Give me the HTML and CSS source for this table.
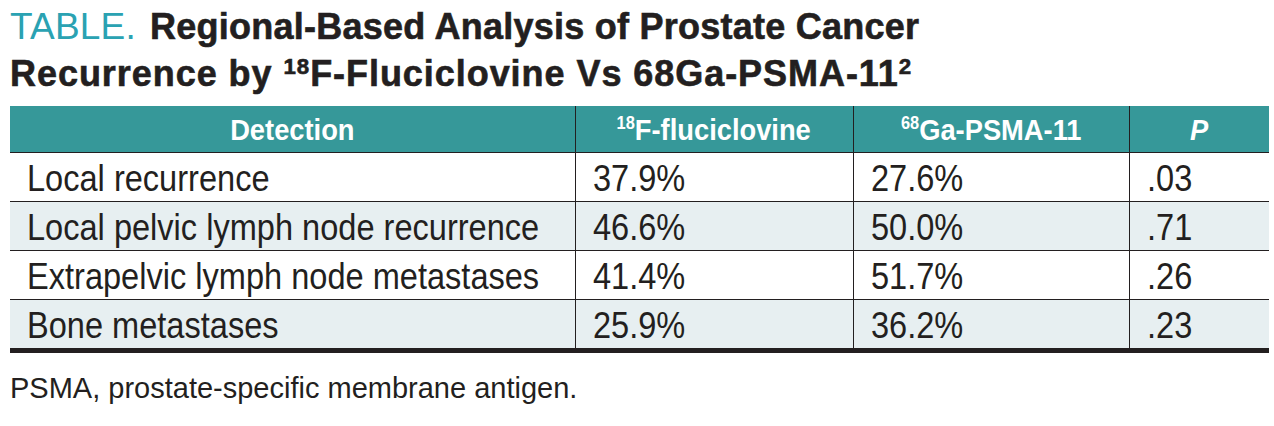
FILE: index.html
```html
<!DOCTYPE html>
<html>
<head>
<meta charset="utf-8">
<link rel="stylesheet" href="styles.css">
</head>
<body>
<div class="page">
  <h1 class="title"><span class="line"><span class="label">TABLE.</span><span class="heading first">Regional-Based Analysis of Prostate Cancer</span></span><span class="line"><span class="heading second">Recurrence by <sup>18</sup>F-Fluciclovine Vs 68Ga-PSMA-11<sup>2</sup></span></span></h1>
  <table class="data">
    <colgroup>
      <col class="c1"><col class="c2"><col class="c3"><col class="c4">
    </colgroup>
    <thead>
      <tr>
        <th><span class="hx">Detection</span></th>
        <th><span class="hx"><sup>18</sup>F-fluciclovine</span></th>
        <th><span class="hx"><sup>68</sup>Ga-PSMA-11</span></th>
        <th><span class="hx"><i>P</i></span></th>
      </tr>
    </thead>
    <tbody>
      <tr>
        <td><span class="tx">Local recurrence</span></td>
        <td><span class="tx">37.9%</span></td>
        <td><span class="tx">27.6%</span></td>
        <td><span class="tx">.03</span></td>
      </tr>
      <tr class="alt">
        <td><span class="tx">Local pelvic lymph node recurrence</span></td>
        <td><span class="tx">46.6%</span></td>
        <td><span class="tx">50.0%</span></td>
        <td><span class="tx">.71</span></td>
      </tr>
      <tr>
        <td><span class="tx">Extrapelvic lymph node metastases</span></td>
        <td><span class="tx">41.4%</span></td>
        <td><span class="tx">51.7%</span></td>
        <td><span class="tx">.26</span></td>
      </tr>
      <tr class="alt">
        <td><span class="tx">Bone metastases</span></td>
        <td><span class="tx">25.9%</span></td>
        <td><span class="tx">36.2%</span></td>
        <td><span class="tx">.23</span></td>
      </tr>
    </tbody>
  </table>
  <p class="note">PSMA, prostate-specific membrane antigen.</p>
</div>
</body>
</html>
```
FILE: styles.css
```css
html, body {
  margin: 0;
  padding: 0;
  background: #ffffff;
}
.page {
  padding: 3px 5px 0 10px;
  font-family: "Liberation Sans", Arial, sans-serif;
  color: #231f20;
}
.title {
  margin: 0;
  font-size: 36px;
  line-height: 47px;
  font-weight: normal;
}
.line {
  display: block;
  white-space: nowrap;
}
.label {
  color: #2aa2b2;
  font-size: 37px;
  font-weight: normal;
  letter-spacing: 0.2px;
  margin-right: 14px;
}
.heading {
  font-weight: bold;
  color: #231f20;
  -webkit-text-stroke: 0.6px #231f20;
}
.heading.first {
  letter-spacing: 0.25px;
}
.heading.second {
  letter-spacing: 0.95px;
}
.heading sup {
  font-size: 0.62em;
  line-height: 0;
  vertical-align: 0.55em;
}
.data {
  margin-top: 9px;
  width: 1259px;
  border-collapse: collapse;
  table-layout: fixed;
}
.c1 { width: 565px; }
.c2 { width: 278px; }
.c3 { width: 276px; }
.c4 { width: 140px; }
.data th {
  background: #369899;
  color: #ffffff;
  height: 46px;
  padding: 0;
  font-size: 30px;
  font-weight: bold;
  text-align: center;
  vertical-align: middle;
  border-left: 1px solid #231f20;
  border-bottom: 1.5px solid #231f20;
}
.data th:first-child,
.data td:first-child {
  border-left: none;
}
.hx {
  display: inline-block;
  transform: scaleX(0.91);
  transform-origin: center;
  padding-top: 2px;
}
.hx sup {
  font-size: 0.6em;
  line-height: 0;
  vertical-align: 0.6em;
}
.hx i {
  font-style: italic;
}
.data td {
  height: 49px;
  padding: 3px 0 0 17px;
  font-size: 37px;
  vertical-align: middle;
  border-left: 1px solid #231f20;
  border-top: 1.5px solid #231f20;
  white-space: nowrap;
  box-sizing: border-box;
}
.data tbody tr:last-child td {
  border-bottom: 5px solid #231f20;
  height: 51px;
}
.data tr.alt td {
  background: #e7eff1;
}
.tx {
  display: inline-block;
  transform: scaleX(0.88);
  transform-origin: left center;
}
.note {
  margin: 18px 0 0 0;
  font-size: 29px;
  line-height: 34px;
}
```
